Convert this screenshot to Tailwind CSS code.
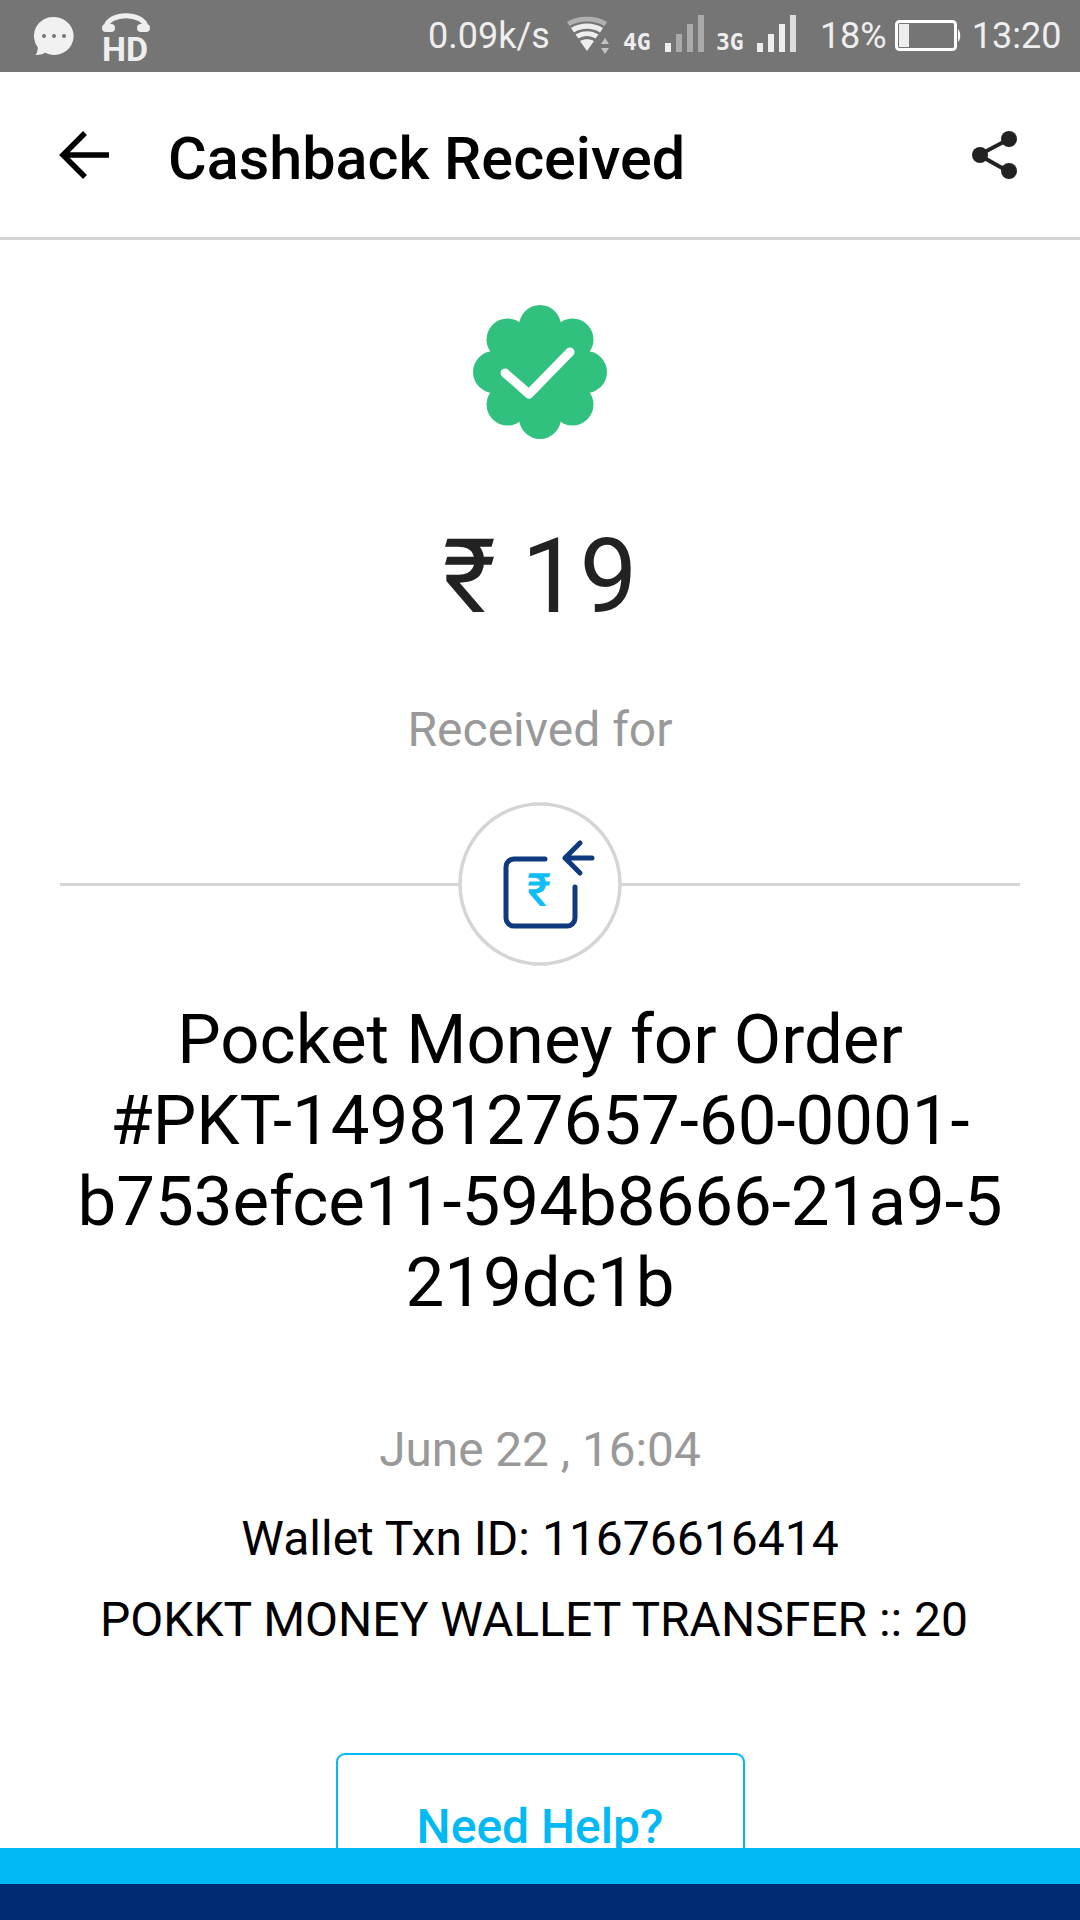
<!DOCTYPE html>
<html lang="en">
<head>
    <meta charset="UTF-8">
    <meta name="viewport" content="width=device-width, initial-scale=1.0">
    <title>Cashback Received</title>
    <script src="https://cdn.jsdelivr.net/npm/@tailwindcss/browser@4"></script>
</head>
<body class="bg-white font-[Roboto,sans-serif]">
<div class="relative w-[1080px] h-[1920px] overflow-hidden bg-white">

    <!-- Status bar -->
    <div class="h-[72px] bg-[#757575] flex items-center text-[#eeeeee] text-[36px] font-normal">
        <svg class="ml-[33px] w-[42px] h-[44px]" viewBox="0 0 42 44">
            <path d="M21 3a19.500 19 0 1 1-9 35.800c-2.500 1.600-6.500 2.400-9.500 2.200 1.500-2 2.300-4.500 2.300-7.500A19 19 0 0 1 21 3z" fill="#f1f1f1"/>
            <circle cx="11" cy="22" r="2" fill="#757575"/>
            <circle cx="21" cy="22" r="2" fill="#757575"/>
            <circle cx="31" cy="22" r="2" fill="#757575"/>
        </svg>
        <div class="relative ml-[27px] w-[48px] h-[50px] mt-[2px]">
            <svg class="absolute left-0 top-0 w-[48px] h-[24px]" viewBox="0 0 48 24">
                <path d="M4 15c3-15 37-15 40 0" fill="none" stroke="#eeeeee" stroke-width="5"/>
                <rect x="0" y="12" width="13" height="8" rx="4" fill="#eeeeee"/>
                <rect x="35" y="12" width="13" height="8" rx="4" fill="#eeeeee"/>
            </svg>
            <span class="absolute left-0 top-[18px] text-[34px] leading-[38px] font-bold text-[#eeeeee]">HD</span>
        </div>
        <span class="ml-[278px]">0.09k/s</span>
        <svg class="ml-[17px] w-[44px] h-[40px]" viewBox="0 0 44 40">
            <path d="M0 6C10-1 30-1 40 6l-2.500 4C28 4 12 4 2.500 10z" fill="#b0b0b0"/>
            <path d="M4 12c9-6 23-6 32 0l-3 4.500c-7-5-19-5-26 0z" fill="#eeeeee"/>
            <path d="M8.500 18.500c7-4.500 16-4.500 23 0l-3 4c-5-3.500-12-3.500-17 0z" fill="#eeeeee"/>
            <path d="M13 25c4-2.500 10-2.500 14 0L20 35z" fill="#eeeeee"/>
            <path d="M38 22l4 6h-8zM34 32h8l-4 6z" fill="#c4c4c4"/>
        </svg>
        <span class="ml-[12px] mt-[12px] w-[28px] text-[23px] leading-[20px] font-bold font-[DejaVu_Sans_Mono,monospace] text-[#eeeeee]">4G</span>
        <svg class="ml-[14px] w-[40px] h-[38px] mt-[-4px]" viewBox="0 0 40 38">
            <rect x="0" y="28" width="6" height="9" fill="#eeeeee"/>
            <rect x="11" y="19" width="6" height="18" fill="#aaaaaa"/>
            <rect x="22" y="9" width="6" height="28" fill="#aaaaaa"/>
            <rect x="33" y="0" width="6" height="37" fill="#aaaaaa"/>
        </svg>
        <span class="ml-[11px] mt-[12px] w-[28px] text-[23px] leading-[20px] font-bold font-[DejaVu_Sans_Mono,monospace] text-[#eeeeee]">3G</span>
        <svg class="ml-[13px] w-[40px] h-[38px] mt-[-4px]" viewBox="0 0 40 38">
            <rect x="0" y="28" width="6" height="9" fill="#eeeeee"/>
            <rect x="11" y="19" width="6" height="18" fill="#eeeeee"/>
            <rect x="22" y="9" width="6" height="28" fill="#eeeeee"/>
            <rect x="33" y="0" width="6" height="37" fill="#dddddd"/>
        </svg>
        <span class="ml-[23px]">18%</span>
        <svg class="ml-[8px] w-[67px] h-[32px]" viewBox="0 0 67 32">
            <rect x="1.500" y="1.500" width="59" height="28" rx="3" fill="none" stroke="#ffffff" stroke-width="3"/>
            <rect x="4" y="4" width="10" height="23" fill="#eeeeee"/>
            <path d="M63 9c3 3 3 10 0 13z" fill="#ffffff"/>
        </svg>
        <span class="ml-[10px]">13:20</span>
    </div>

    <!-- Header -->
    <div class="h-[168px] flex items-center border-b-[3px] border-[#d5d5d5]">
        <svg class="ml-[58px] w-[52px] h-[52px]" viewBox="0 0 52 52">
            <path d="M51 26H5M27 4 5 26l22 22" fill="none" stroke="#000000" stroke-width="5.500"/>
        </svg>
        <h1 class="ml-[58px] flex-1 pt-[10px] text-[59.300px] font-medium text-black">Cashback Received</h1>
        <svg class="mr-[61px] w-[48px] h-[52px]" viewBox="0 0 48 52">
            <path d="M40 9 8 26l32 18" fill="none" stroke="#222222" stroke-width="4"/>
            <circle cx="9" cy="26" r="8" fill="#222222"/>
            <circle cx="38" cy="10" r="8" fill="#222222"/>
            <circle cx="38" cy="42" r="8" fill="#222222"/>
        </svg>
    </div>

    <!-- Content -->
    <div class="flex flex-col items-center">
        <svg class="mt-[64px] w-[136px] h-[136px]" viewBox="0 0 136 136">
            <g fill="#30c17e">
                <circle cx="68" cy="68" r="48"/>
                <circle cx="68" cy="22" r="21"/>
                <circle cx="100.500" cy="35.500" r="21"/>
                <circle cx="114" cy="68" r="21"/>
                <circle cx="100.500" cy="100.500" r="21"/>
                <circle cx="68" cy="114" r="21"/>
                <circle cx="35.500" cy="100.500" r="21"/>
                <circle cx="22" cy="68" r="21"/>
                <circle cx="35.500" cy="35.500" r="21"/>
            </g>
            <path d="M33 69 57 90 98 48" fill="none" stroke="#ffffff" stroke-width="9" stroke-linecap="round" stroke-linejoin="round"/>
        </svg>

        <div class="mt-[77px] h-[120px] text-[103px] leading-[120px] text-[#222222]">₹ 19</div>

        <div class="mt-[65px] text-[48px] leading-[56px] text-[#999999]">Received for</div>

        <!-- Divider with payment icon -->
        <div class="relative mt-[44px] w-[960px] h-[164px] flex items-center justify-center">
            <div class="absolute inset-x-0 top-[81px] h-[3px] bg-[#d5d5d5]"></div>
            <svg class="relative w-[164px] h-[164px]" viewBox="0 0 164 164">
                <circle cx="82" cy="82" r="80" fill="#ffffff" stroke="#d5d5d5" stroke-width="3.500"/>
                <path d="M87 57H56a8 8 0 0 0-8 8v51a8 8 0 0 0 8 8h53a8 8 0 0 0 8-8V85" fill="none" stroke="#0f3a7d" stroke-width="5" stroke-linecap="round"/>
                <path d="M134 56H107M122 41 107 56l15 15" fill="none" stroke="#0f3a7d" stroke-width="5" stroke-linecap="round" stroke-linejoin="round"/>
                <text x="81" y="104" text-anchor="middle" font-size="46" font-weight="500" fill="#12bdf6">₹</text>
            </svg>
        </div>

        <div class="mt-[33px] text-center text-[69px] leading-[81px] text-black">
            Pocket Money for Order<br>#PKT-1498127657-60-0001-<br>b753efce11-594b8666-21a9-5<br>219dc1b
        </div>

        <div class="mt-[99px] text-[47.700px] leading-[56px] text-[#999999]">June 22 , 16:04</div>
        <div class="mt-[33px] text-[48px] leading-[56px] text-black">Wallet Txn ID: 11676616414</div>
        <div class="mt-[25px] text-[48px] leading-[56px] text-black">POKKT MONEY WALLET TRANSFER :: 20&nbsp;</div>

        <button class="mt-[105px] w-[409px] h-[150px] pt-[44px] border-[2px] border-[#00b9f5] rounded-[9px] text-[48px] leading-[56px] font-medium text-[#00b9f5] self-center flex justify-center items-start">Need Help?</button>
    </div>

    <!-- Bottom brand strip, sits over the scrolled content -->
    <div class="absolute bottom-0 inset-x-0">
        <div class="h-[36px] bg-[#00b9f5]"></div>
        <div class="h-[36px] bg-[#012b72]"></div>
    </div>
</div>
</body>
</html>
